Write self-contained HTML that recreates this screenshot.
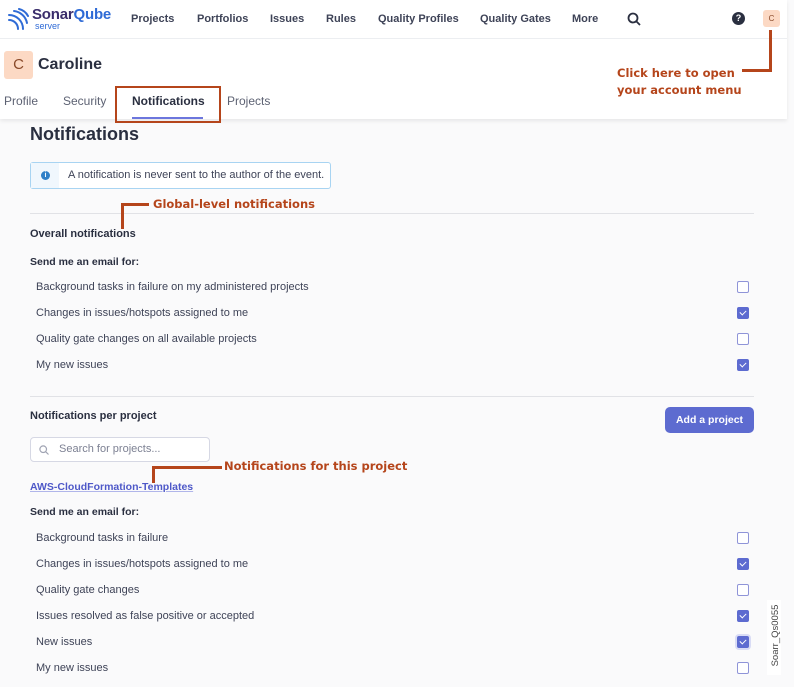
<!DOCTYPE html>
<html><head><meta charset="utf-8"><style>
*{margin:0;padding:0;box-sizing:border-box}
body{width:794px;height:687px;background:#fafafb;font-family:"Liberation Sans",sans-serif;color:#2a2f40;position:relative;overflow:hidden}
.a{position:absolute;white-space:nowrap}
.hdr{position:absolute;left:0;top:0;width:787px;height:119px;background:#fff;box-shadow:0 2px 4px rgba(0,0,0,.08)}
.nav{font-size:11px;font-weight:bold;color:#3e4357;top:13px}
.tab{font-size:12px;color:#5d6273;top:94px}
.row{font-size:11px;color:#3e4357;left:36px}
.cb{position:absolute;left:737px;width:12px;height:12px;border:1.5px solid #8f94d8;border-radius:2px;background:#fff}
.cb.on{background:#5d6bd0;border-color:#5d6bd0}
.cb.on:after{content:"";position:absolute;left:3px;top:1px;width:3px;height:5px;border:solid #fff;border-width:0 1.3px 1.3px 0;transform:rotate(45deg)}
.ann{color:#b5451b;font-weight:bold;font-family:"DejaVu Sans",sans-serif;font-size:11.5px;letter-spacing:0}
.ol{position:absolute;background:#b5451b}
.bold{font-weight:bold;font-size:11px;color:#2a2f40}
.hr{position:absolute;left:30px;width:724px;height:1px;background:#e1e2e6}
</style></head><body>
<div class="hdr"></div>
<svg class="a" style="left:6px;top:8px" width="24" height="22" viewBox="0 0 24 22" fill="none" stroke="#2f6bd6" stroke-width="2" stroke-linecap="round"><path d="M3 12a9 9 0 0 1 9 9"/><path d="M3 7a14 14 0 0 1 14 14"/><path d="M8 3a15 15 0 0 1 13 12"/><path d="M13 1a14 14 0 0 1 9 7"/></svg>
<div class="a" style="left:32px;top:6px;font-size:15px;font-weight:bold;color:#3a2d6b;letter-spacing:-.2px">Sonar<span style="color:#2f6bd6">Qube</span></div>
<div class="a" style="left:35px;top:21px;font-size:9px;color:#2f6bd6">server</div>
<div class="a nav" style="left:131px">Projects</div>
<div class="a nav" style="left:197px">Portfolios</div>
<div class="a nav" style="left:270px">Issues</div>
<div class="a nav" style="left:326px">Rules</div>
<div class="a nav" style="left:378px">Quality Profiles</div>
<div class="a nav" style="left:480px">Quality Gates</div>
<div class="a nav" style="left:572px">More</div>
<svg class="a" style="left:627px;top:12px" width="14" height="14" viewBox="0 0 14 14" fill="none" stroke="#2a2f40" stroke-width="1.8"><circle cx="6" cy="6" r="4.5"/><path d="M9.5 9.5L13 13"/></svg>
<div class="a" style="left:732px;top:12px;width:13px;height:13px;border-radius:50%;background:#2a2f40;color:#fff;font-size:9px;font-weight:bold;text-align:center;line-height:13px">?</div>
<div class="a" style="left:763px;top:10px;width:17px;height:17px;border-radius:3px;background:#fcd9c4;color:#8a4a2a;font-size:8px;text-align:center;line-height:17px">C</div>
<div class="a" style="left:0;top:38px;width:787px;height:1px;background:#eceef1"></div>
<div class="a" style="left:4px;top:51px;width:29px;height:28px;border-radius:3px;background:#fcd9c4;color:#8a4a2a;font-size:15px;text-align:center;line-height:28px">C</div>
<div class="a" style="left:38px;top:56px;font-size:16px;font-weight:bold;color:#2a2f40">Caroline</div>
<div class="a tab" style="left:4px">Profile</div>
<div class="a tab" style="left:63px">Security</div>
<div class="a tab" style="left:132px;font-weight:bold;color:#2a2f40">Notifications</div>
<div class="a" style="left:132px;top:117px;width:71px;height:2px;background:#6c76dd"></div>
<div class="a tab" style="left:227px">Projects</div>
<div class="a" style="left:115px;top:86px;width:106px;height:37px;border:2px solid #b5451b"></div>
<div class="ol" style="left:769px;top:30px;width:3px;height:41px"></div>
<div class="ol" style="left:742px;top:69px;width:30px;height:3px"></div>
<div class="a ann" style="left:617px;top:66px">Click here to open</div>
<div class="a ann" style="left:617px;top:83px">your account menu</div>

<div class="a" style="left:30px;top:124px;font-size:18px;font-weight:bold;color:#2a2f40">Notifications</div>
<div class="a" style="left:30px;top:162px;width:301px;height:27px;border:1px solid #a8d4f2;border-radius:3px;background:#fff"><div style="position:absolute;left:0;top:0;width:28px;height:25px;background:#f0f7fd"></div><div style="position:absolute;left:10px;top:8px;width:9px;height:9px;border-radius:50%;background:#2f80c8;color:#fff;font-size:7px;font-weight:bold;text-align:center;line-height:9px">i</div><div style="position:absolute;left:37px;top:6px;font-size:11px;color:#3e4357">A notification is never sent to the author of the event.</div></div>
<div class="hr" style="top:213px"></div>
<div class="ol" style="left:121px;top:203px;width:3px;height:26px"></div>
<div class="ol" style="left:121px;top:203px;width:28px;height:3px"></div>
<div class="a ann" style="left:153px;top:197px">Global-level notifications</div>
<div class="a bold" style="left:30px;top:228px">Overall notifications</div>
<div class="a bold" style="left:30px;top:256px;font-size:10.5px">Send me an email for:</div>
<div class="a row" style="top:281px">Background tasks in failure on my administered projects</div><div class="cb" style="top:281px"></div>
<div class="a row" style="top:307px">Changes in issues/hotspots assigned to me</div><div class="cb on" style="top:307px"></div>
<div class="a row" style="top:333px">Quality gate changes on all available projects</div><div class="cb" style="top:333px"></div>
<div class="a row" style="top:359px">My new issues</div><div class="cb on" style="top:359px"></div>
<div class="hr" style="top:396px"></div>
<div class="a bold" style="left:30px;top:410px">Notifications per project</div>
<div class="a" style="left:665px;top:407px;width:89px;height:26px;border-radius:5px;background:#5d6bd0;color:#fff;font-size:10.5px;font-weight:bold;text-align:center;line-height:26px">Add a project</div>
<div class="a" style="left:30px;top:437px;width:180px;height:25px;border:1px solid #d6d8e4;border-radius:4px;background:#fff"></div>
<svg class="a" style="left:39px;top:445px" width="10" height="10" viewBox="0 0 10 10" fill="none" stroke="#a0a4b3" stroke-width="1.2"><circle cx="4.2" cy="4.2" r="3.3"/><path d="M6.8 6.8L9.5 9.5"/></svg>
<div class="a" style="left:59px;top:443px;font-size:11px;color:#7d8193">Search for projects...</div>
<div class="ol" style="left:152px;top:466px;width:3px;height:17px"></div>
<div class="ol" style="left:152px;top:466px;width:70px;height:3px"></div>
<div class="a ann" style="left:224px;top:459px">Notifications for this project</div>
<div class="a" style="left:30px;top:481px;font-size:10.5px;font-weight:bold;color:#4e58c8;text-decoration:underline;text-decoration-color:#b0b5ea">AWS-CloudFormation-Templates</div>
<div class="a bold" style="left:30px;top:506px;font-size:10.5px">Send me an email for:</div>
<div class="a row" style="top:532px">Background tasks in failure</div><div class="cb" style="top:532px"></div>
<div class="a row" style="top:558px">Changes in issues/hotspots assigned to me</div><div class="cb on" style="top:558px"></div>
<div class="a row" style="top:584px">Quality gate changes</div><div class="cb" style="top:584px"></div>
<div class="a row" style="top:610px">Issues resolved as false positive or accepted</div><div class="cb on" style="top:610px"></div>
<div class="a row" style="top:636px">New issues</div><div class="cb on" style="top:636px;box-shadow:0 0 0 2px #d9dcf5"></div>
<div class="a row" style="top:662px">My new issues</div><div class="cb" style="top:662px"></div>
<div class="a" style="left:767px;top:600px;width:14px;height:75px;background:#fff"></div>
<div class="a" style="left:738px;top:630px;font-size:9.5px;color:#444;transform:rotate(-90deg);transform-origin:center;width:75px;text-align:center">Soarr_Qs0055</div>
</body></html>
